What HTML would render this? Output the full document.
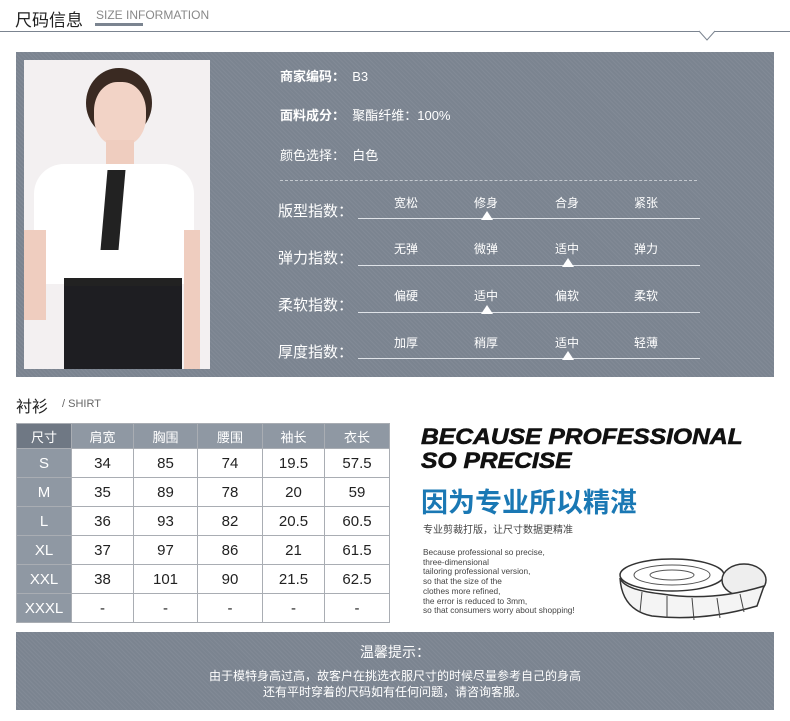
<!DOCTYPE html>
<html><head><meta charset="utf-8"><style>
*{margin:0;padding:0;box-sizing:border-box}
body{width:790px;height:721px;background:#fff;position:relative;overflow:hidden;font-family:"Liberation Sans","Noto Sans CJK SC",sans-serif;color:#333}
.a{position:absolute;white-space:nowrap}
.panel{background:#7b8490;background-image:repeating-linear-gradient(45deg,rgba(255,255,255,.05) 0 1px,transparent 1px 3px)}
.w{color:#fff}
.hl{position:absolute;height:1px;background:#dfe3e8}
.tri{position:absolute;width:0;height:0;border-left:6px solid transparent;border-right:6px solid transparent;border-bottom:9px solid #fff}
table{border-collapse:collapse;position:absolute;left:16px;top:423px}
td{border:1px solid #a9adb3;text-align:center;font-size:15px;color:#222;height:29px}
tr:first-child td{background:#8f98a3;color:#fff;height:25px;font-size:13px}
td.h{background:#8f98a3;color:#fff}
tr:first-child td.h{background:#6f7884}
</style></head><body>
<div class="a" style="left:15px;top:6px;font-size:17px;color:#222">尺码信息</div>
<div class="a" style="left:96px;top:8px;font-size:12px;color:#888">SIZE INFORMATION</div>
<div class="a" style="left:95px;top:23px;width:48px;height:3px;background:#7b8490"></div>
<div class="a" style="left:0;top:31px;width:790px;height:1px;background:#7b8490"></div>
<svg class="a" style="left:698px;top:30px" width="20" height="12"><path d="M1 1 L9 10 L17 1" fill="#fff" stroke="#7b8490"/></svg>

<div class="a panel" style="left:16px;top:52px;width:758px;height:325px"></div>
<div class="a" style="left:24px;top:60px;width:186px;height:309px;background:#f3f0f1;overflow:hidden">
 <div class="a" style="left:62px;top:8px;width:66px;height:70px;border-radius:50%;background:#3a2a22"></div>
 <div class="a" style="left:70px;top:22px;width:52px;height:64px;border-radius:45%;background:#f2d3c6"></div>
 <div class="a" style="left:82px;top:80px;width:28px;height:28px;background:#efcdbf"></div>
 <div class="a" style="left:10px;top:104px;width:160px;height:120px;border-radius:30px 30px 10px 10px;background:#fff"></div>
 <div class="a" style="left:80px;top:110px;width:18px;height:80px;background:#222;transform:skewX(-5deg)"></div>
 <div class="a" style="left:0;top:170px;width:22px;height:90px;background:#efcdbf"></div>
 <div class="a" style="left:40px;top:218px;width:118px;height:8px;background:#222"></div>
 <div class="a" style="left:40px;top:226px;width:118px;height:90px;background:#1e1e22"></div>
 <div class="a" style="left:160px;top:170px;width:16px;height:140px;background:#efcdbf"></div>
</div>

<div class="a w" style="left:280px;top:66px;font-size:13px"><b>商家编码：</b>&nbsp;&nbsp;B3</div>
<div class="a w" style="left:280px;top:105px;font-size:13px"><b>面料成分：</b>&nbsp;&nbsp;聚酯纤维：100%</div>
<div class="a w" style="left:280px;top:145px;font-size:13px">颜色选择：&nbsp;&nbsp;白色</div>
<div class="a" style="left:280px;top:180px;width:417px;border-top:1px dashed #c5cad0"></div>

<div class="a w" style="left:278px;top:200px;font-size:15px">版型指数：</div>
<div class="a w" style="left:278px;top:247px;font-size:15px">弹力指数：</div>
<div class="a w" style="left:278px;top:294px;font-size:15px">柔软指数：</div>
<div class="a w" style="left:278px;top:341px;font-size:15px">厚度指数：</div>

<div class="a w" style="left:394px;top:194px;font-size:12px">宽松</div><div class="a w" style="left:474px;top:194px;font-size:12px">修身</div><div class="a w" style="left:555px;top:194px;font-size:12px">合身</div><div class="a w" style="left:634px;top:194px;font-size:12px">紧张</div>
<div class="hl" style="left:358px;top:218px;width:342px"></div><div class="tri" style="left:481px;top:211px"></div>
<div class="a w" style="left:394px;top:240px;font-size:12px">无弹</div><div class="a w" style="left:474px;top:240px;font-size:12px">微弹</div><div class="a w" style="left:555px;top:240px;font-size:12px">适中</div><div class="a w" style="left:634px;top:240px;font-size:12px">弹力</div>
<div class="hl" style="left:358px;top:265px;width:342px"></div><div class="tri" style="left:562px;top:258px"></div>
<div class="a w" style="left:394px;top:287px;font-size:12px">偏硬</div><div class="a w" style="left:474px;top:287px;font-size:12px">适中</div><div class="a w" style="left:555px;top:287px;font-size:12px">偏软</div><div class="a w" style="left:634px;top:287px;font-size:12px">柔软</div>
<div class="hl" style="left:358px;top:312px;width:342px"></div><div class="tri" style="left:481px;top:305px"></div>
<div class="a w" style="left:394px;top:334px;font-size:12px">加厚</div><div class="a w" style="left:474px;top:334px;font-size:12px">稍厚</div><div class="a w" style="left:555px;top:334px;font-size:12px">适中</div><div class="a w" style="left:634px;top:334px;font-size:12px">轻薄</div>
<div class="hl" style="left:358px;top:358px;width:342px"></div><div class="tri" style="left:562px;top:351px"></div>

<div class="a" style="left:16px;top:393px;font-size:16px;color:#222">衬衫</div>
<div class="a" style="left:62px;top:398px;font-size:11px;color:#666">/ SHIRT</div>

<table>
<tr><td class="h" style="width:55px">尺寸</td><td style="width:62px">肩宽</td><td style="width:64px">胸围</td><td style="width:65px">腰围</td><td style="width:62px">袖长</td><td style="width:65px">衣长</td></tr>
<tr><td class="h">S</td><td>34</td><td>85</td><td>74</td><td>19.5</td><td>57.5</td></tr>
<tr><td class="h">M</td><td>35</td><td>89</td><td>78</td><td>20</td><td>59</td></tr>
<tr><td class="h">L</td><td>36</td><td>93</td><td>82</td><td>20.5</td><td>60.5</td></tr>
<tr><td class="h">XL</td><td>37</td><td>97</td><td>86</td><td>21</td><td>61.5</td></tr>
<tr><td class="h">XXL</td><td>38</td><td>101</td><td>90</td><td>21.5</td><td>62.5</td></tr>
<tr><td class="h">XXXL</td><td>-</td><td>-</td><td>-</td><td>-</td><td>-</td></tr>
</table>

<div class="a" style="left:421px;top:425px;font-size:22px;font-weight:bold;font-style:italic;color:#111;line-height:24px;transform:scaleX(1.12);transform-origin:left top;-webkit-text-stroke:0.6px #111">BECAUSE PROFESSIONAL<br>SO PRECISE</div>
<div class="a" style="left:421px;top:481px;font-size:27px;font-weight:bold;color:#1a78b4">因为专业所以精湛</div>
<div class="a" style="left:423px;top:521px;font-size:10px;color:#444">专业剪裁打版，让尺寸数据更精准</div>
<div class="a" style="left:423px;top:548px;font-size:8.3px;color:#444;line-height:9.7px">Because professional so precise,<br>three-dimensional<br>tailoring professional version,<br>so that the size of the<br>clothes more refined,<br>the error is reduced to 3mm,<br>so that consumers worry about shopping!</div>
<svg class="a" style="left:612px;top:550px" width="160" height="75">
<ellipse cx="60" cy="25" rx="52" ry="16" fill="#fff" stroke="#333" stroke-width="1.5"/>
<ellipse cx="60" cy="25" rx="38" ry="10" fill="none" stroke="#555"/>
<ellipse cx="60" cy="25" rx="22" ry="5" fill="none" stroke="#555"/>
<ellipse cx="132" cy="30" rx="22" ry="16" fill="#eee" stroke="#333" stroke-width="1.5"/>
<path d="M8 28 Q10 60 40 66 Q90 72 145 56 L152 36 Q100 52 50 44 Q12 40 8 28Z" fill="#f4f4f4" stroke="#333" stroke-width="1.5"/>
<path d="M30 42 L28 62 M55 46 L55 68 M80 48 L82 70 M105 48 L108 68 M128 44 L132 62" stroke="#444"/>
</svg>

<div class="a panel" style="left:16px;top:632px;width:758px;height:78px"></div>
<div class="a w" style="left:0;width:790px;text-align:center;top:642px;font-size:14px">温馨提示：</div>
<div class="a w" style="left:0;width:790px;text-align:center;top:668px;font-size:12px;line-height:16px">由于模特身高过高，故客户在挑选衣服尺寸的时候尽量参考自己的身高<br>还有平时穿着的尺码如有任何问题，请咨询客服。</div>
</body></html>
